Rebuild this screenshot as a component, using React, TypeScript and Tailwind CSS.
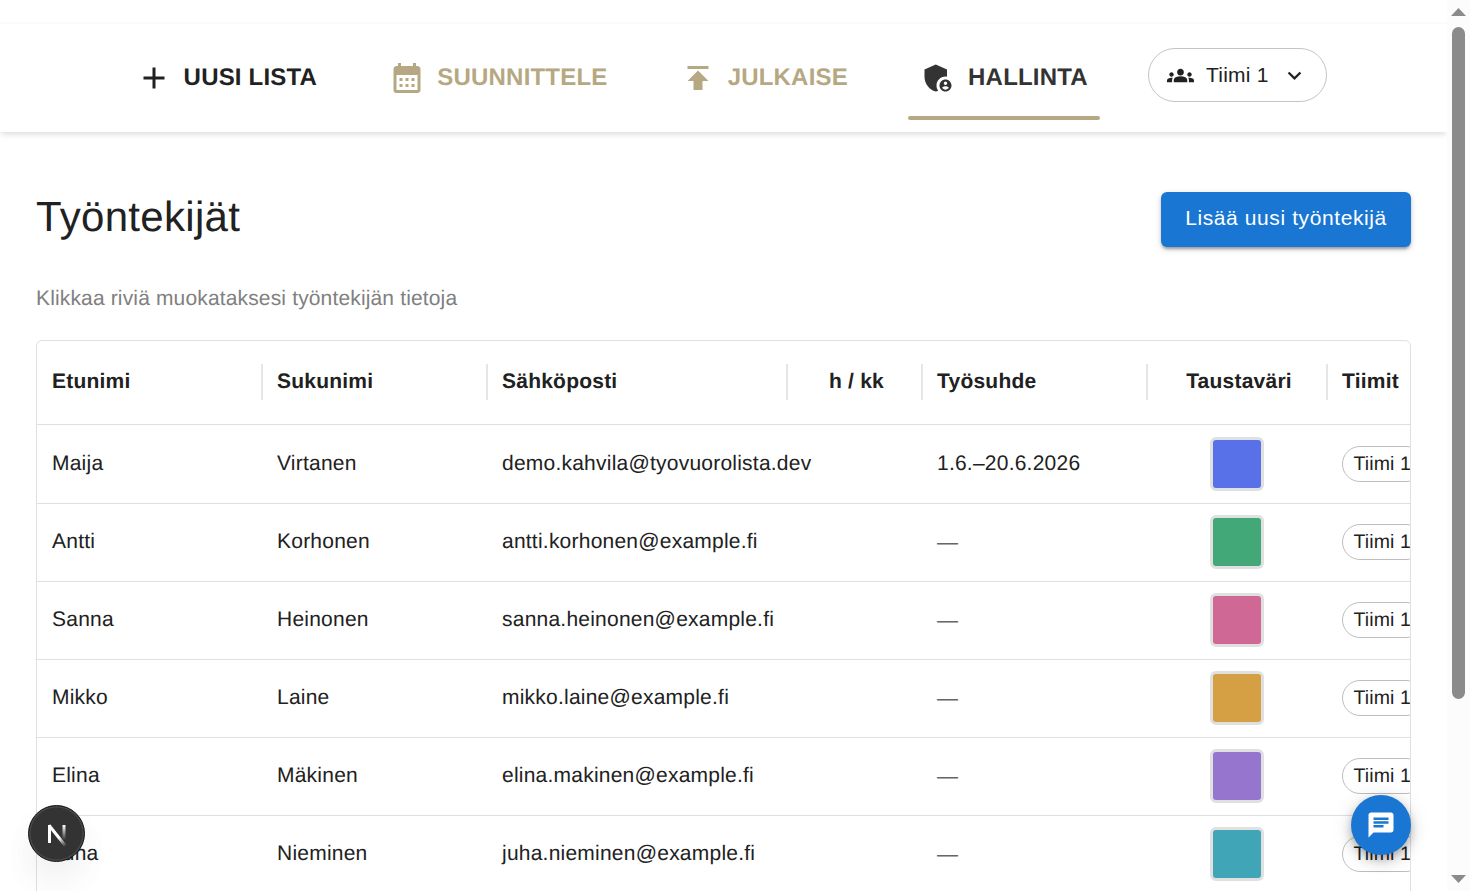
import type { ReactNode } from 'react';
import {
  MdAdd,
  MdAdminPanelSettings,
  MdCalendarMonth,
  MdChat,
  MdExpandMore,
  MdGroups,
  MdPublish,
} from 'react-icons/md';

const EMPLOYEES = [
  { first: 'Maija', last: 'Virtanen', email: 'demo.kahvila@tyovuorolista.dev', contract: '1.6.–20.6.2026', color: '#5870e8' },
  { first: 'Antti', last: 'Korhonen', email: 'antti.korhonen@example.fi', contract: null, color: '#43a878' },
  { first: 'Sanna', last: 'Heinonen', email: 'sanna.heinonen@example.fi', contract: null, color: '#d06896' },
  { first: 'Mikko', last: 'Laine', email: 'mikko.laine@example.fi', contract: null, color: '#d4a043' },
  { first: 'Elina', last: 'Mäkinen', email: 'elina.makinen@example.fi', contract: null, color: '#9575cd' },
  { first: 'Juha', last: 'Nieminen', email: 'juha.nieminen@example.fi', contract: null, color: '#41a5b8' },
];

const COLUMNS = [
  { label: 'Etunimi', className: 'w-[225px] px-[15px]' },
  { label: 'Sukunimi', className: 'w-[225px] px-[15px]' },
  { label: 'Sähköposti', className: 'w-[300px] px-[15px]' },
  { label: 'h / kk', className: 'w-[135px] justify-center pl-1' },
  { label: 'Työsuhde', className: 'w-[225px] px-[15px]' },
  { label: 'Taustaväri', className: 'w-[180px] justify-center pl-1' },
  { label: 'Tiimit', className: 'w-[225px] px-[15px]' },
];

export default function App() {
  return (
    <div className="relative flex h-[891px] w-[1470px] overflow-hidden bg-white font-['Liberation_Sans',Arial,sans-serif] text-[#212121] [text-rendering:geometricPrecision]">
      <div className="flex w-[1447px] flex-col">
        <Header />
        <EmployeesPage />
      </div>
      <Scrollbar />
      <DevBadge />
      <button
        type="button"
        aria-label="Chat"
        className="absolute top-[795px] left-[1351px] flex size-[60px] items-center justify-center rounded-full bg-[#1976d2] text-white shadow-[0_4px_8px_-1px_rgba(0,0,0,0.25),0_8px_15px_rgba(0,0,0,0.12),0_1px_22px_rgba(0,0,0,0.1)]"
      >
        <MdChat className="size-[30px]" />
      </button>
    </div>
  );
}

function Header() {
  return (
    <header className="mt-[23px] h-[109px] shrink-0 border-t border-[#fafafa] bg-white shadow-[0_3px_6px_-1px_rgba(0,0,0,0.15)]">
      <nav className="flex h-24 items-stretch gap-[48.15px] pl-[123.6px]">
        <NavItem icon={<MdAdd className="size-9" />} label="UUSI LISTA" className="text-[#212121]" />
        <NavItem icon={<MdCalendarMonth className="size-9" />} label="SUUNNITTELE" className="text-[#b5a882]" />
        <NavItem icon={<MdPublish className="size-9" />} label="JULKAISE" className="text-[#b5a882]" />
        <NavItem icon={<MdAdminPanelSettings className="size-9" />} label="HALLINTA" className="text-[#333333]" active />
        <button
          type="button"
          className="mt-6 flex h-[54px] w-[179px] items-center rounded-full border border-[#c4c4c4] pl-[18px]"
        >
          <MdGroups className="size-[27px]" />
          <span className="ml-3 text-[21px] leading-[30px] tracking-[0.225px]">Tiimi 1</span>
          <MdExpandMore className="ml-[12.5px] size-[27px]" />
        </button>
      </nav>
    </header>
  );
}

function NavItem({
  icon,
  label,
  className,
  active,
}: {
  icon: ReactNode;
  label: string;
  className: string;
  active?: boolean;
}) {
  return (
    <a className={`flex flex-col justify-between ${className}`}>
      <span className="mt-9 flex items-center gap-3 px-3">
        {icon}
        <span className="text-2xl font-bold tracking-[0.2px] whitespace-nowrap">{label}</span>
      </span>
      {active && <span className="h-1 rounded-full bg-[#b5a882]" />}
    </a>
  );
}

function EmployeesPage() {
  return (
    <main className="px-9 pt-[60px]">
      <div className="flex items-start justify-between">
        <h1 className="text-[42px] leading-[50px] tracking-[0.31px]">Työntekijät</h1>
        <button
          type="button"
          className="h-[55px] w-[250px] rounded-md bg-[#1976d2] pb-[3px] text-[21px] tracking-[0.6px] whitespace-nowrap text-white shadow-[0_3px_3px_-1px_rgba(0,0,0,0.3),0_2px_6px_rgba(0,0,0,0.18)]"
        >
          Lisää uusi työntekijä
        </button>
      </div>
      <p className="mt-[37px] text-[21px] leading-[30px] tracking-[0.15px] text-[#808080]">
        Klikkaa riviä muokataksesi työntekijän tietoja
      </p>
      <EmployeeTable />
    </main>
  );
}

function EmployeeTable() {
  return (
    <div className="mt-[26px] h-[700px] w-[1375px] overflow-hidden rounded-md border border-[#e0e0e0] text-[21px] tracking-[0.225px]">
      <div className="flex h-[84px] w-[1515px] items-center border-b border-[#e0e0e0] pb-0.5">
        {COLUMNS.map((c) => (
          <div key={c.label} className={`relative flex h-9 shrink-0 items-center font-bold ${c.className}`}>
            {c.label}
            <span className="absolute top-0 -right-px h-9 w-0.5 bg-[#e6e6e6]" />
          </div>
        ))}
      </div>
      {EMPLOYEES.map((e) => (
        <div
          key={e.email}
          className="flex h-[78px] w-[1515px] items-center shadow-[inset_0_1px_#e0e0e0] nth-2:shadow-none"
        >
          <div className="w-[225px] px-[15px]">{e.first}</div>
          <div className="w-[225px] px-[15px]">{e.last}</div>
          <div className="w-[300px] px-[15px] whitespace-nowrap">{e.email}</div>
          <div className="w-[135px]" />
          <div className="w-[225px] px-[15px]">
            {e.contract ?? <span className="block pt-px text-[#666666]">—</span>}
          </div>
          <div className="flex w-[180px] justify-center">
            <div className="size-[54px] rounded-md border-3 border-[#e0e0e0]" style={{ backgroundColor: e.color }} />
          </div>
          <div className="w-[225px] px-[15px]">
            <span className="flex h-9 w-[82px] items-center rounded-full border border-[#bdbdbd] pt-px pl-[10.5px] text-[19.5px] tracking-[0.1px] whitespace-nowrap">
              Tiimi 1
            </span>
          </div>
        </div>
      ))}
    </div>
  );
}

function Scrollbar() {
  return (
    <div className="flex flex-1 flex-col items-center justify-between bg-[#fcfcfc] pt-2 pb-2">
      <svg viewBox="0 0 15 8" className="h-2 w-[15px] fill-[#8b8b8b]">
        <path d="M7.5 0 15 8H0z" />
      </svg>
      <div className="mt-[11px] mb-auto h-[672px] w-[13px] rounded-full bg-[#8b8b8b]" />
      <svg viewBox="0 0 15 8" className="h-2 w-[15px] fill-[#8b8b8b]">
        <path d="M0 0h15L7.5 8z" />
      </svg>
    </div>
  );
}

function DevBadge() {
  return (
    <div className="absolute top-[805px] left-[28px] flex size-[57px] items-center justify-center rounded-full border-[1.5px] border-[#171717] bg-[#333333] shadow-[inset_0_0_0_1.5px_#484848,0_16px_36px_-4px_rgba(0,0,0,0.06),0_24px_48px_-8px_rgba(0,0,0,0.06)]">
      <svg viewBox="0 0 56 56" className="size-14 shrink-0" fill="none" strokeWidth="3">
        <defs>
          <linearGradient id="badge-diagonal" x1="20" y1="19" x2="37" y2="40" gradientUnits="userSpaceOnUse">
            <stop offset="0.6" stopColor="#fff" />
            <stop offset="1" stopColor="#fff" stopOpacity="0" />
          </linearGradient>
          <linearGradient id="badge-stem" x1="35" y1="19" x2="35" y2="34" gradientUnits="userSpaceOnUse">
            <stop stopColor="#fff" />
            <stop offset="1" stopColor="#fff" stopOpacity="0" />
          </linearGradient>
        </defs>
        <path d="M20.5 37V19" stroke="#fff" />
        <path d="M20 19.2 36.5 40" stroke="url(#badge-diagonal)" />
        <path d="M35 19V33.5" stroke="url(#badge-stem)" />
      </svg>
    </div>
  );
}
